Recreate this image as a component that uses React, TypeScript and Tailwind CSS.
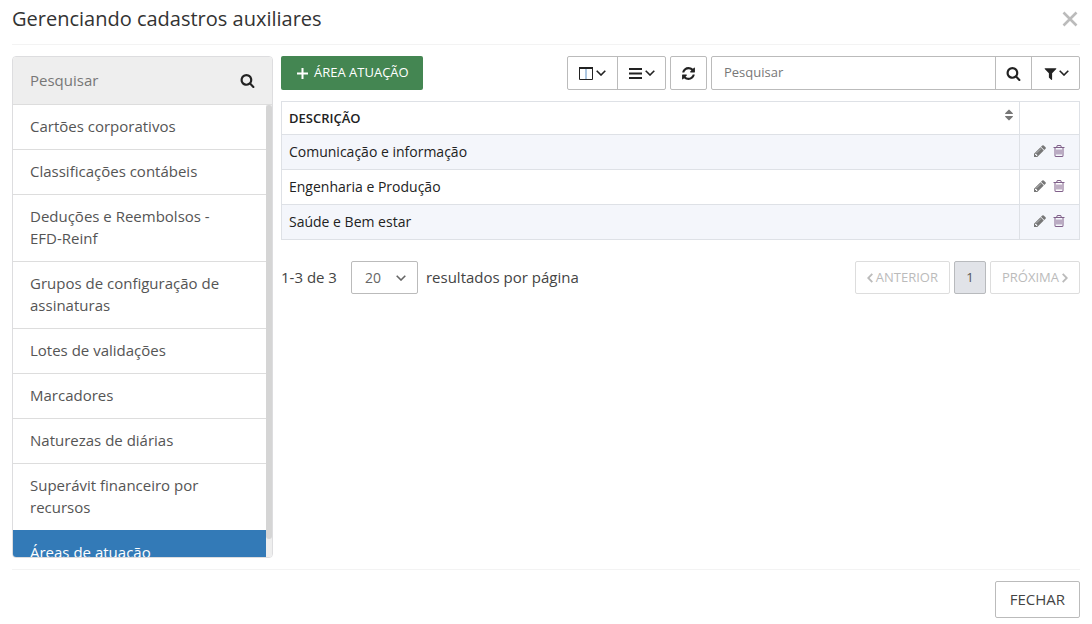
import { UIEvent, useState } from "react";
import clsx from "clsx";

const CATEGORIES = [
  "Cartões corporativos",
  "Classificações contábeis",
  "Deduções e Reembolsos - EFD-Reinf",
  "Grupos de configuração de assinaturas",
  "Lotes de validações",
  "Marcadores",
  "Naturezas de diárias",
  "Superávit financeiro por recursos",
  "Áreas de atuação",
];

const AREAS = ["Comunicação e informação", "Engenharia e Produção", "Saúde e Bem estar"];

const ICONS = {
  search:
    "M1216 832q0-185-131.5-316.5t-316.5-131.5-316.5 131.5-131.5 316.5 131.5 316.5 316.5 131.5 316.5-131.5 131.5-316.5zm512 832q0 52-38 90t-90 38q-54 0-90-38l-343-342q-179 124-399 124-143 0-273.5-55.5t-225-150-150-225-55.5-273.5 55.5-273.5 150-225 225-150 273.5-55.5 273.5 55.5 225 150 150 225 55.5 273.5q0 220-124 399l343 343q37 37 37 90z",
  refresh:
    "M1639 1056q0 5-1 7-64 268-268 434.5t-478 166.5q-146 0-282.5-55t-243.5-157l-129 129q-19 19-45 19t-45-19-19-45v-448q0-26 19-45t45-19h448q26 0 45 19t19 45-19 45l-137 137q71 66 161 102t187 36q134 0 250-65t186-179q11-17 53-117 8-23 30-23h192q13 0 22.5 9.5t9.5 22.5zm25-800v448q0 26-19 45t-45 19h-448q-26 0-45-19t-19-45 19-45l138-138q-148-137-349-137-134 0-250 65t-186 179q-11 17-53 117-8 23-30 23h-199q-13 0-22.5-9.5t-9.5-22.5v-7q65-268 270-434.5t480-166.5q146 0 284 55.5t245 156.5l130-129q19-19 45-19t45 19 19 45z",
  pencil:
    "M491 1536l91-91-235-235-91 91v107h128v128h107zm523-928q0-22-22-22-10 0-17 7l-542 542q-7 7-7 17 0 22 22 22 10 0 17-7l542-542q7-7 7-17zm-54-192l416 416-832 832h-416v-416zm683 96q0 53-37 90l-166 166-416-416 166-165q36-38 90-38 53 0 91 38l235 234q37 39 37 91z",
  trash:
    "M704 736v576q0 14-9 23t-23 9h-64q-14 0-23-9t-9-23v-576q0-14 9-23t23-9h64q14 0 23 9t9 23zm256 0v576q0 14-9 23t-23 9h-64q-14 0-23-9t-9-23v-576q0-14 9-23t23-9h64q14 0 23 9t9 23zm256 0v576q0 14-9 23t-23 9h-64q-14 0-23-9t-9-23v-576q0-14 9-23t23-9h64q14 0 23 9t9 23zm128 724v-948h-896v948q0 22 7 40.5t14.5 27 10.5 8.5h832q3 0 10.5-8.5t14.5-27 7-40.5zm-672-1076h448l-48-117q-7-9-17-11h-317q-10 2-17 11zm928 32v64q0 14-9 23t-23 9h-96v948q0 83-47 143.5t-113 60.5h-832q-66 0-113-58.5t-47-141.5v-952h-96q-14 0-23-9t-9-23v-64q0-14 9-23t23-9h309l70-167q15-37 54-63t79-26h320q40 0 79 26t54 63l70 167h309q14 0 23 9t9 23z",
  filter:
    "M1595 295q17 41-14 70l-493 493v742q0 42-39 59-13 5-25 5-27 0-45-19l-256-256q-19-19-19-45v-486l-493-493q-31-29-14-70 17-39 59-39h1280q42 0 59 39z",
  sort: "M1408 1088q0 26-19 45l-448 448q-19 19-45 19t-45-19l-448-448q-19-19-19-45t19-45 45-19h896q26 0 45 19t19 45zm0-384q0 26-19 45t-45 19h-896q-26 0-45-19t-19-45 19-45l448-448q19-19 45-19t45 19l448 448q19 19 19 45z",
};

function Icon({ name, className }: { name: keyof typeof ICONS; className?: string }) {
  return (
    <svg viewBox="0 0 1792 1792" fill="currentColor" aria-hidden="true" className={clsx("shrink-0", className)}>
      <path d={ICONS[name]} />
    </svg>
  );
}

function Chevron({ className }: { className?: string }) {
  return (
    <svg viewBox="0 0 10 6" fill="none" stroke="currentColor" aria-hidden="true" className={clsx("h-[6px] w-[10px] shrink-0", className)}>
      <path d="M.7.7 5 5 9.3.7" strokeWidth="1.6" />
    </svg>
  );
}

function ColumnsIcon() {
  return (
    <svg viewBox="0 0 14 13" fill="none" stroke="currentColor" aria-hidden="true" className="h-[13px] w-[14px]">
      <path d="M.5 1v11.5h13V1" />
      <path d="M7 2v10" stroke="#5b8fc4" />
      <path d="M0 1h14" strokeWidth="2" />
    </svg>
  );
}

function BarsIcon() {
  return (
    <svg viewBox="0 0 13 11" fill="currentColor" aria-hidden="true" className="h-[11px] w-[13px]">
      <path d="M0 0h13v2H0zM0 4.5h13v2H0zM0 9h13v2H0z" />
    </svg>
  );
}

function Sidebar() {
  const [selected, setSelected] = useState("Áreas de atuação");
  const [thumb, setThumb] = useState(0);

  function handleScroll(event: UIEvent<HTMLDivElement>) {
    const el = event.currentTarget;
    setThumb((el.scrollTop / el.scrollHeight) * 100);
  }

  return (
    <aside className="w-[261px] shrink-0 overflow-hidden rounded border border-[#dddddf]">
      <div className="flex h-[47px] items-center bg-[#eee] px-[17px]">
        <input
          aria-label="Pesquisar cadastros"
          placeholder="Pesquisar"
          className="min-w-0 flex-1 bg-transparent text-[15px] outline-none placeholder:text-[#777]"
        />
        <button aria-label="Buscar cadastro" className="text-[#222]">
          <Icon name="search" className="size-[15px]" />
        </button>
      </div>
      <div className="flex max-h-[453px]">
        <div onScroll={handleScroll} className="min-w-0 flex-1 overflow-y-auto [scrollbar-width:none]">
          {CATEGORIES.map((category) => (
            <button
              key={category}
              onClick={() => setSelected(category)}
              className={clsx(
                "block w-full border-t pt-[10px] pr-6 pb-3 pl-[17px] text-left text-[15px] leading-[22px]",
                category === selected ? "border-[#337ab7] bg-[#337ab7] text-white" : "border-[#ddd] text-[#555]",
              )}
            >
              {category}
            </button>
          ))}
        </div>
        <div className="w-[6px] shrink-0 border-t border-[#ddd] bg-[#eee]">
          <div className="relative h-[96%] rounded-full bg-[#d5d5d5]" style={{ top: `${thumb}%` }} />
        </div>
      </div>
    </aside>
  );
}

function Toolbar() {
  return (
    <div className="flex items-start gap-1">
      <button className="flex h-[34px] items-center gap-[6px] rounded-xs bg-[#448652] pr-[14px] pl-4 text-[13px] text-white">
        <svg viewBox="0 0 11 11" stroke="currentColor" strokeWidth="2" aria-hidden="true" className="size-[11px]">
          <path d="M5.5 0v11M0 5.5h11" />
        </svg>
        ÁREA ATUAÇÃO
      </button>
      <div className="ml-auto flex h-[34px] divide-x divide-[#bbb] rounded-xs border border-[#bbb] text-[#222]">
        <button aria-label="Colunas" className="flex w-[50px] items-center justify-center gap-[3px]">
          <ColumnsIcon />
          <Chevron />
        </button>
        <button aria-label="Densidade" className="flex w-[47px] items-center justify-center gap-[3px]">
          <BarsIcon />
          <Chevron />
        </button>
      </div>
      <button aria-label="Atualizar" className="flex h-[34px] w-[37px] items-center justify-center rounded-xs border border-[#bbb] text-[#222]">
        <Icon name="refresh" className="size-[15px]" />
      </button>
      <div className="flex h-[34px] w-[369px] divide-x divide-[#bbb] rounded-xs border border-[#bbb] text-[#222]">
        <input
          aria-label="Pesquisar áreas"
          placeholder="Pesquisar"
          className="min-w-0 flex-1 px-3 text-[13px] outline-none placeholder:text-[#777]"
        />
        <button aria-label="Buscar" className="flex w-9 items-center justify-center">
          <Icon name="search" className="size-[15px]" />
        </button>
        <button aria-label="Filtros" className="flex w-[47px] items-center justify-center gap-px">
          <Icon name="filter" className="size-[15px]" />
          <Chevron />
        </button>
      </div>
    </div>
  );
}

function AreasTable() {
  return (
    <table className="mt-[11px] w-full border-collapse text-[14px] text-[#222] [&_td]:border [&_td]:border-[#dee1e6] [&_td]:pb-[2px] [&_th]:border [&_th]:border-[#dee1e6]">
      <thead>
        <tr className="h-[33px]">
          <th scope="col" className="pr-[3px] pl-[7px] text-left text-[13px] font-semibold">
            <button className="flex w-full items-start justify-between leading-5">
              DESCRIÇÃO
              <Icon name="sort" className="size-[14px] text-[#777]" />
            </button>
          </th>
          <th scope="col" aria-label="Ações" className="w-[60px]" />
        </tr>
      </thead>
      <tbody>
        {AREAS.map((area) => (
          <tr key={area} className="h-[35px] odd:bg-[#f4f6fb]">
            <td className="px-[7px]">{area}</td>
            <td>
              <div className="flex items-center justify-center gap-[5px] text-[#777]">
                <button aria-label={`Editar ${area}`}>
                  <Icon name="pencil" className="size-[14px]" />
                </button>
                <button aria-label={`Excluir ${area}`} className="text-[#80608a]">
                  <Icon name="trash" className="size-[14px]" />
                </button>
              </div>
            </td>
          </tr>
        ))}
      </tbody>
    </table>
  );
}

function Pagination() {
  return (
    <div className="mt-[21px] flex items-center text-[15px] text-[#444]">
      <span>1-3 de 3</span>
      <div className="relative ml-[14px]">
        <select
          aria-label="Resultados por página"
          defaultValue="20"
          className="h-[33px] w-[67px] appearance-none rounded-xs border border-[#bbb] bg-white pl-[13px] text-[14px] text-[#666]"
        >
          <option>10</option>
          <option>20</option>
          <option>50</option>
        </select>
        <Chevron className="pointer-events-none absolute top-[14px] right-3 text-[#666]" />
      </div>
      <span className="ml-2">resultados por página</span>
      <nav aria-label="Paginação" className="ml-auto flex gap-1 text-[13px] font-medium">
        <button disabled className="flex h-[33px] items-center gap-[3px] rounded-xs border border-[#ddd] px-[11px] text-[#bbb]">
          <svg viewBox="0 0 6 10" fill="none" stroke="currentColor" strokeWidth="1.8" aria-hidden="true" className="h-[10px] w-[6px]">
            <path d="M5.3.8 1.2 5l4.1 4.2" />
          </svg>
          ANTERIOR
        </button>
        <button aria-current="page" className="h-[33px] w-8 rounded-xs border border-[#b8babd] bg-[#e1e3e8] text-[#555]">
          1
        </button>
        <button disabled className="flex h-[33px] items-center gap-[3px] rounded-xs border border-[#ddd] px-[11px] text-[#bbb]">
          PRÓXIMA
          <svg viewBox="0 0 6 10" fill="none" stroke="currentColor" strokeWidth="1.8" aria-hidden="true" className="h-[10px] w-[6px]">
            <path d="M.7.8 4.8 5 .7 9.2" />
          </svg>
        </button>
      </nav>
    </div>
  );
}

export default function App() {
  return (
    <main className="bg-white px-3 font-['Open_Sans',sans-serif]">
      <header className="flex h-[45px] items-center justify-between border-b border-[#f3f3f3] pb-[6px]">
        <h1 className="text-[20px] text-[#333]">Gerenciando cadastros auxiliares</h1>
        <button aria-label="Fechar janela" className="pr-[2px] text-[#bbb]">
          <svg viewBox="0 0 16 16" stroke="currentColor" strokeWidth="2.6" aria-hidden="true" className="size-4">
            <path d="M1.5 1.5l13 13M14.5 1.5l-13 13" />
          </svg>
        </button>
      </header>
      <div className="flex gap-2 py-[11px]">
        <Sidebar />
        <section className="min-w-0 flex-1">
          <Toolbar />
          <AreasTable />
          <Pagination />
        </section>
      </div>
      <footer className="flex justify-end border-t border-[#f3f3f3] pt-[11px]">
        <button className="h-[37px] rounded-xs border border-[#bbb] px-[14px] text-[15px] text-[#444]">FECHAR</button>
      </footer>
    </main>
  );
}
